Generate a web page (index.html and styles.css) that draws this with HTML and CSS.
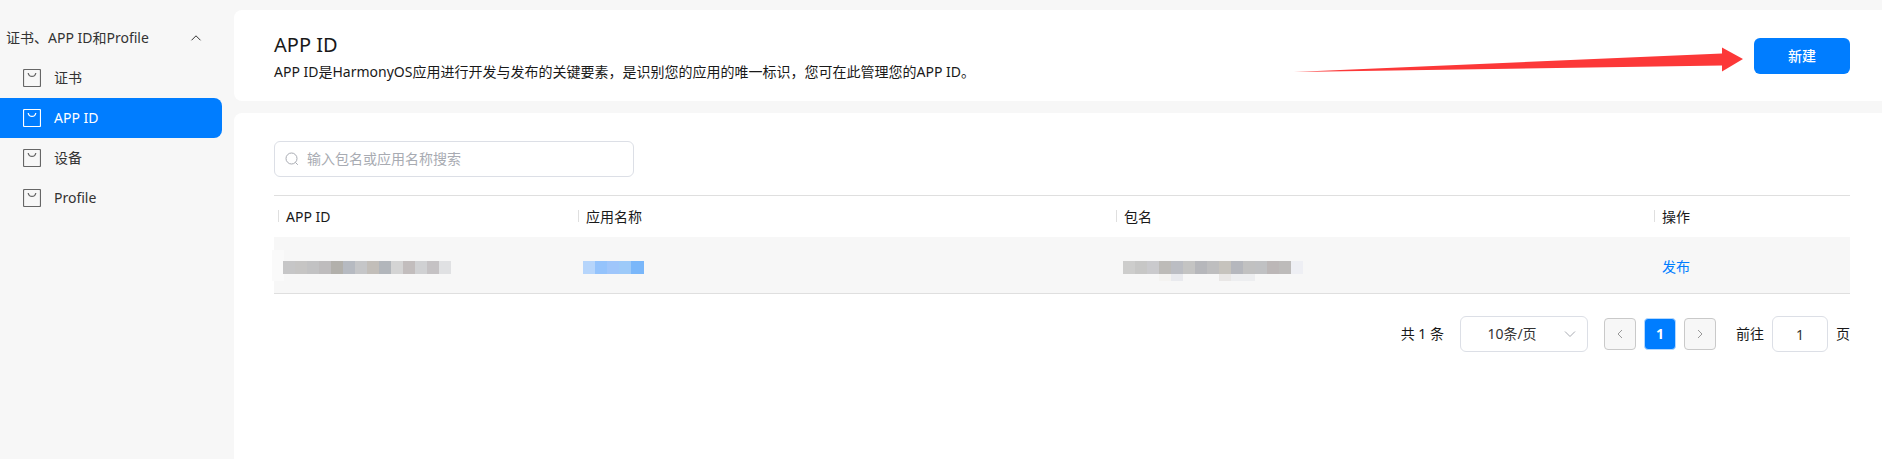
FILE: index.html
```html
<!DOCTYPE html>
<html lang="zh-CN">
<head>
  <meta charset="UTF-8" />
  <title>APP ID</title>
  <link rel="stylesheet" href="styles.css">
</head>
<body>

  <svg width="0" height="0" class="sprite">
    <symbol id="icon-bag" viewBox="0 0 18 18">
      <rect x="0.5" y="0.5" width="17" height="17" rx="1" fill="none" stroke="currentColor" stroke-width="1.2" />
      <path d="M5.2 4C5.6 6.2 7.2 7.4 9 7.4S12.4 6.2 12.8 4" fill="none" stroke="currentColor" stroke-width="1.3" />
    </symbol>
  </svg>

  <aside class="sidebar">
    <button class="menu-title" type="button" aria-expanded="true">
      <span>证书、APP ID和Profile</span>
      <svg class="arrow-up" width="12" height="12" viewBox="0 0 12 12"><path d="M1.5 8.3L6 3.8L10.5 8.3" /></svg>
    </button>
    <nav class="menu">
      <a class="menu-item" href="#"><svg class="bag"><use href="#icon-bag" /></svg>证书</a>
      <a class="menu-item active" href="#"><svg class="bag"><use href="#icon-bag" /></svg>APP ID</a>
      <a class="menu-item" href="#"><svg class="bag"><use href="#icon-bag" /></svg>设备</a>
      <a class="menu-item" href="#"><svg class="bag"><use href="#icon-bag" /></svg>Profile</a>
    </nav>
  </aside>

  <main class="content">
    <header class="card page-header">
      <div>
        <h1>APP ID</h1>
        <p>APP ID是HarmonyOS应用进行开发与发布的关键要素，是识别您的应用的唯一标识，您可在此管理您的APP ID。</p>
      </div>
      <button class="create" type="button">新建</button>
      <svg class="pointer" width="450" height="26" viewBox="0 0 450 26">
        <path d="M0 25L428 6.5V0.5L449 12L428 24.5V18.5Z" fill="#fc3838" />
      </svg>
    </header>

    <section class="card list">
      <label class="search">
        <svg width="14" height="14" viewBox="0 0 14 14"><circle cx="6.5" cy="6.5" r="5.5" /><path d="M10.4 10.4L12.8 12.8" /></svg>
        <input type="text" placeholder="输入包名或应用名称搜索" aria-label="搜索" />
      </label>

      <table>
        <thead>
          <tr>
            <th class="col-id">APP ID</th>
            <th class="col-name">应用名称</th>
            <th class="col-name">包名</th>
            <th class="col-action">操作</th>
          </tr>
        </thead>
        <tbody>
          <tr>
            <td>
              <svg class="mosaic" width="180" height="32" viewBox="0 0 180 32">
                <rect x="-2" y="1" width="12" height="31" fill="#fafafa" />
                <g transform="translate(9 12)">
                  <rect width="12" height="13" fill="#c6c6c7" />
                  <rect x="12" width="12" height="13" fill="#c6c5c4" />
                  <rect x="24" width="12" height="13" fill="#c2c2c3" />
                  <rect x="36" width="12" height="13" fill="#bebcbd" />
                  <rect x="48" width="12" height="13" fill="#b2b0ab" />
                  <rect x="60" width="12" height="13" fill="#b6bac1" />
                  <rect x="72" width="12" height="13" fill="#c5c6c8" />
                  <rect x="84" width="12" height="13" fill="#c2beb9" />
                  <rect x="96" width="12" height="13" fill="#b2b6bb" />
                  <rect x="108" width="12" height="13" fill="#d4d4d4" />
                  <rect x="120" width="12" height="13" fill="#c2bdbd" />
                  <rect x="132" width="12" height="13" fill="#d0d1d3" />
                  <rect x="144" width="12" height="13" fill="#c5c2c4" />
                  <rect x="156" width="12" height="13" fill="#e0e1e3" />
                </g>
              </svg>
            </td>
            <td>
              <svg class="mosaic" width="80" height="32" viewBox="0 0 80 32">
                <g transform="translate(9 12)">
                  <rect width="13" height="13" fill="#b6d5fb" />
                  <rect x="12" width="12" height="13" fill="#94c3fc" />
                  <rect x="24" width="12" height="13" fill="#9fc6fb" />
                  <rect x="36" width="12" height="13" fill="#9dcaf9" />
                  <rect x="48" width="13" height="13" fill="#7ab7fa" />
                </g>
              </svg>
            </td>
            <td>
              <svg class="mosaic" width="200" height="32" viewBox="0 0 200 32">
                <g transform="translate(11 12)">
                  <rect width="12" height="13" fill="#cdcdcc" />
                  <rect x="12" width="12" height="13" fill="#c7c7c6" />
                  <rect x="24" width="12" height="13" fill="#cacacd" />
                  <rect x="36" width="12" height="13" fill="#bdbbb8" />
                  <rect x="48" width="12" height="13" fill="#bbbdc3" />
                  <rect x="60" width="12" height="13" fill="#c4c4c3" />
                  <rect x="72" width="12" height="13" fill="#b6b7bb" />
                  <rect x="84" width="12" height="13" fill="#bebebf" />
                  <rect x="96" width="12" height="13" fill="#c6c3bd" />
                  <rect x="108" width="12" height="13" fill="#b5b7bd" />
                  <rect x="120" width="12" height="13" fill="#c1c1c1" />
                  <rect x="132" width="12" height="13" fill="#c0c1c3" />
                  <rect x="144" width="12" height="13" fill="#bcb7b7" />
                  <rect x="156" width="12" height="13" fill="#bdbbba" />
                  <rect x="168" width="12" height="13" fill="#eeeff4" />
                  <rect x="36" y="13" width="12" height="7" fill="#f4f3f1" />
                  <rect x="48" y="13" width="12" height="7" fill="#e9eaee" />
                  <rect x="96" y="13" width="12" height="7" fill="#e9e7e6" />
                  <rect x="108" y="13" width="24" height="7" fill="#edeef0" />
                </g>
              </svg>
            </td>
            <td><a class="link" href="#">发布</a></td>
          </tr>
        </tbody>
      </table>

      <div class="pagination">
        <span class="total">共 1 条</span>
        <div class="size">
          <select aria-label="每页条数"><option>10条/页</option></select>
          <svg width="12" height="12" viewBox="0 0 12 12"><path d="M1 3.5L6 8.5L11 3.5" /></svg>
        </div>
        <div class="pages">
          <button class="pager" type="button" disabled aria-label="上一页"><svg width="12" height="12" viewBox="0 0 12 12"><path d="M8 2L4 6L8 10" /></svg></button>
          <button class="pager current" type="button">1</button>
          <button class="pager" type="button" disabled aria-label="下一页"><svg width="12" height="12" viewBox="0 0 12 12"><path d="M4 2L8 6L4 10" /></svg></button>
        </div>
        <label class="jump">前往 <input type="text" value="1" /> 页</label>
      </div>
    </section>
  </main>

</body>
</html>
```
FILE: styles.css
```css
* {
  box-sizing: border-box;
}

body {
  margin: 0;
  min-height: 100vh;
  display: flex;
  background: #f7f7f7;
  color: #191919;
  font-family: "Noto Sans", "Noto Sans CJK SC", sans-serif;
  font-size: 14px;
  line-height: 20px;
}

button, input, select {
  font: inherit;
  color: inherit;
}

a {
  text-decoration: none;
}

.sprite {
  position: absolute;
}

/* sidebar */
.sidebar {
  flex: none;
  width: 234px;
  padding: 18px 12px 0 0;
}

.menu-title {
  display: flex;
  align-items: center;
  justify-content: space-between;
  width: 100%;
  height: 40px;
  padding: 0 20px 0 6px;
  border: none;
  background: none;
  color: #333;
}

.arrow-up {
  fill: none;
  stroke: #333;
}

.menu-item {
  display: flex;
  align-items: center;
  gap: 13px;
  height: 40px;
  padding-left: 23px;
  color: #333;
}

.menu-item.active {
  background: #007dff;
  color: #fff;
  border-radius: 0 8px 8px 0;
}

.bag {
  width: 18px;
  height: 18px;
  color: #666;
}

.active .bag {
  color: #fff;
}

/* content */
.content {
  flex: 1;
  display: flex;
  flex-direction: column;
  gap: 12px;
  padding-top: 10px;
}

.card {
  background: #fff;
  padding: 28px 32px 28px 40px;
  border-radius: 8px 0 0 8px;
}

.page-header {
  position: relative;
  display: flex;
  justify-content: space-between;
  align-items: flex-start;
  padding-top: 20px;
  padding-bottom: 17px;
}

h1 {
  margin: 0;
  font-size: 20px;
  font-weight: 400;
  line-height: 30px;
}

p {
  margin: 0;
  line-height: 24px;
}

.create {
  width: 96px;
  height: 36px;
  margin-top: 8px;
  border: none;
  border-radius: 6px;
  background: #007dff;
  color: #fff;
  font-weight: 500;
  cursor: pointer;
}

.pointer {
  position: absolute;
  top: 37px;
  right: 138px;
}

.list {
  flex: 1;
  border-radius: 8px 0 0 0;
}

.search {
  display: flex;
  align-items: center;
  gap: 8px;
  width: 360px;
  height: 36px;
  padding: 0 10px;
  border: 1px solid #dcdfe6;
  border-radius: 6px;
}

.search svg {
  fill: none;
  stroke: #a8abb2;
}

.search input {
  flex: 1;
  padding: 0;
  border: none;
  outline: none;
  background: none;
}

.search input::placeholder {
  color: #a8abb2;
}

table {
  width: 100%;
  margin-top: 18px;
  border-collapse: separate;
  border-spacing: 0;
  table-layout: fixed;
  border-top: 1px solid #dfdfdf;
}

th {
  height: 41px;
  padding: 0;
  font-weight: 400;
  text-align: left;
}

th::before {
  content: "";
  display: inline-block;
  width: 1px;
  height: 12px;
  margin: 0 7px 0 4px;
  background: #dfdfdf;
}

.col-id {
  width: 300px;
}

.col-action {
  width: 200px;
}

td {
  height: 57px;
  padding: 0;
  background: #f7f7f7;
  border-bottom: 1px solid #dfdfdf;
}

td:last-child {
  padding-top: 4px;
}

.mosaic {
  display: block;
  overflow: visible;
}

.link {
  padding-left: 12px;
  color: #007dff;
}

/* pagination */
.pagination {
  display: flex;
  align-items: center;
  justify-content: flex-end;
  margin-top: 22px;
}

.size {
  position: relative;
  margin: 0 16px;
}

.size select {
  width: 128px;
  height: 36px;
  padding: 0 24px 0 0;
  border: 1px solid #dcdfe6;
  border-radius: 6px;
  background: #fff;
  color: #333;
  text-align: center;
  text-align-last: center;
  appearance: none;
}

.size svg {
  position: absolute;
  top: 12px;
  right: 12px;
  fill: none;
  stroke: #a8abb2;
  pointer-events: none;
}

.pages {
  display: flex;
  gap: 8px;
}

.pager {
  display: flex;
  align-items: center;
  justify-content: center;
  width: 32px;
  height: 32px;
  padding: 0;
  border: 1px solid #c9c9c9;
  border-radius: 4px;
  background: #f7f7f7;
}

.pager svg {
  fill: none;
  stroke: #999;
}

.pager.current {
  border-color: #b3d8ff;
  background: #007dff;
  color: #fff;
  font-weight: 700;
}

.jump {
  display: flex;
  align-items: center;
  gap: 8px;
  margin-left: 20px;
}

.jump input {
  width: 56px;
  height: 36px;
  padding: 0;
  border: 1px solid #dcdfe6;
  border-radius: 6px;
  color: #333;
  text-align: center;
}
```
